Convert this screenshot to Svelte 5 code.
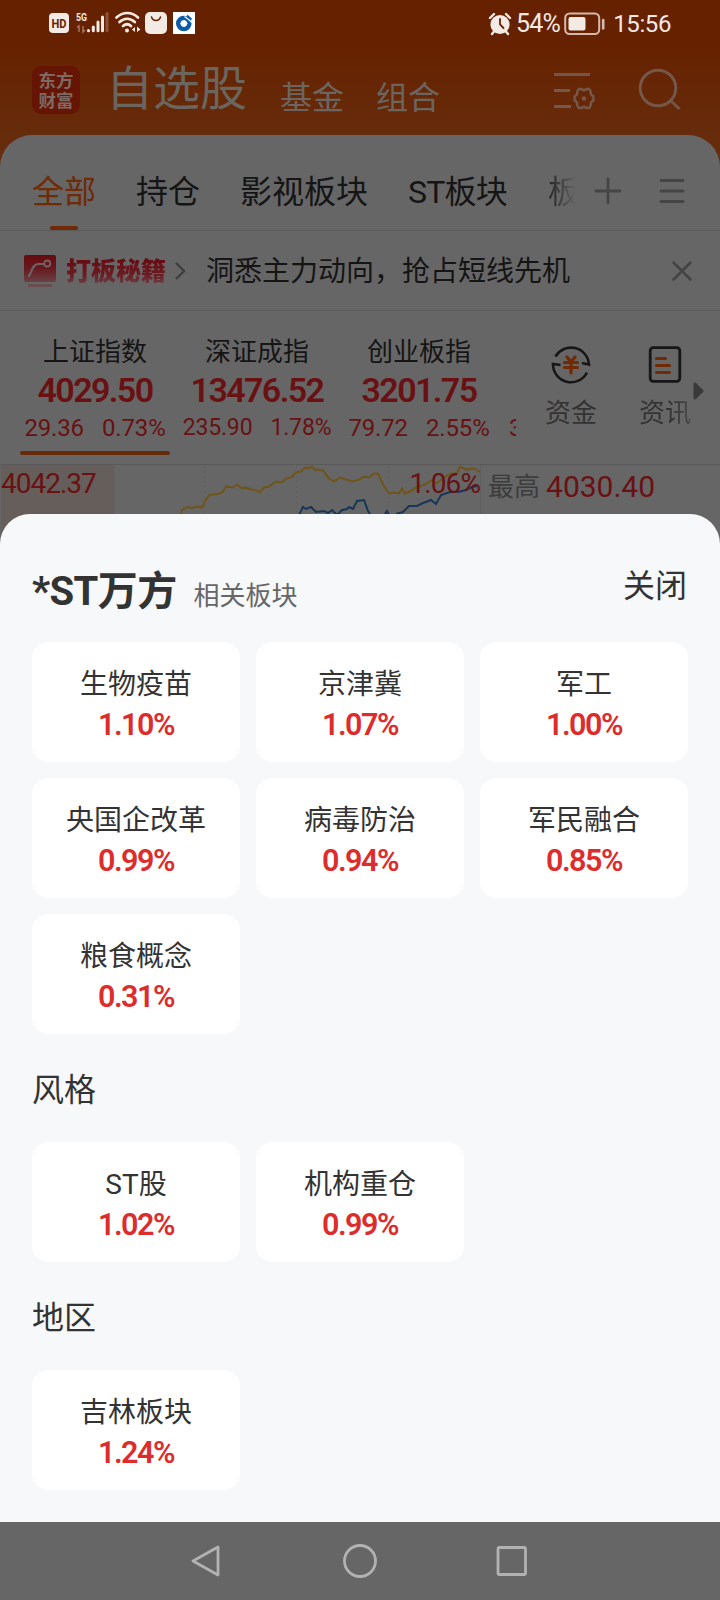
<script>
  const tabs = ['全部', '持仓', '影视板块', 'ST板块'];
  const indices = [
    { name: '上证指数', value: '4029.50', diff: '29.36', pct: '0.73%', size: 24, active: true },
    { name: '深证成指', value: '13476.52', diff: '235.90', pct: '1.78%', size: 23 },
    { name: '创业板指', value: '3201.75', diff: '79.72', pct: '2.55%', size: 24 }
  ];
  const groups = [
    {
      title: '',
      items: [
        ['生物疫苗', '1.10%'], ['京津冀', '1.07%'], ['军工', '1.00%'],
        ['央国企改革', '0.99%'], ['病毒防治', '0.94%'], ['军民融合', '0.85%'],
        ['粮食概念', '0.31%']
      ]
    },
    { title: '风格', items: [['ST股', '1.02%'], ['机构重仓', '0.99%']] },
    { title: '地区', items: [['吉林板块', '1.24%']] }
  ];
</script>

<div class="screen">
  <div class="top">
    <div class="status">
      <svg class="st-left" width="160" height="30" viewBox="45 8 160 30">
        <rect x="49" y="13" width="20" height="20" rx="4" fill="#f3e9e5" />
        <text x="59" y="28" text-anchor="middle" textLength="15" lengthAdjust="spacingAndGlyphs" font-size="13" font-weight="700" fill="#662200">HD</text>
        <text x="76" y="21" textLength="11" lengthAdjust="spacingAndGlyphs" font-size="11.5" font-weight="700" fill="#f3e9e5">5G</text>
        <path d="M77 27.500l2-1.500v6M83 26v6l2-2" fill="none" stroke="#a5796a" stroke-width="1.400" />
        <g stroke="#f3e9e5" stroke-width="3" stroke-linecap="round">
          <path d="M88.500 30.500v.3M93.300 27v3.800M98 22v8.800M102.500 17v13.800" />
          <path d="M107 13.500v17.300" stroke="#8c523b" />
        </g>
        <g fill="none" stroke="#f3e9e5" stroke-width="2.700" stroke-linecap="round">
          <path d="M116.500 17.500c6.500-6 15-6 21.500 0M119.500 22c4.800-4.300 10.500-4.300 15.300 0M123 26c2.600-2.200 5.600-2.200 8 0" />
        </g>
        <circle cx="127" cy="30.500" r="2" fill="#f3e9e5" />
        <path d="M132 29.500l3-2.500v5zM137 26.500l3.500 3-3.500 2.500z" fill="#f3e9e5" />
        <rect x="145" y="12" width="22" height="22" rx="5" fill="#f3e9e5" />
        <path d="M151.500 17c1.500 4.500 7.500 4.500 9 0" fill="none" stroke="#662200" stroke-width="1.500" stroke-linecap="round" />
        <rect x="173" y="12" width="22" height="22" fill="#fff" />
        <circle cx="183.800" cy="23.500" r="5.500" fill="none" stroke="#0d5aa7" stroke-width="4.600" />
        <path d="M184.500 16.500l3.500 2.500 4.500 4" fill="none" stroke="#fff" stroke-width="1.200" />
        <path d="M184 19.700l3.800 3.800-3.800 3.800-3.800-3.800z" fill="#fff" />
        <path d="M187 15.500l4.500 4" stroke="#0d5aa7" stroke-width="1.800" />
      </svg>
      <div class="st-right">
        <svg width="24" height="24" viewBox="0 0 24 24">
          <circle cx="12" cy="12.500" r="9.600" fill="#f3e9e5" />
          <path d="M2 6l4-4M22 6l-4-4M4 22l2-2.500M20 22l-2-2.500" stroke="#f3e9e5" stroke-width="2.400" stroke-linecap="round" />
          <path d="M12 7v5.500l3.500 3.500" fill="none" stroke="#662200" stroke-width="1.800" stroke-linecap="round" />
        </svg>
        <span class="batt-text">54%</span>
        <svg width="42" height="24" viewBox="0 0 42 24">
          <rect x="1.200" y="1.500" width="34" height="20.500" rx="4.500" fill="none" stroke="#d5b9ae" stroke-width="2" />
          <rect x="4.500" y="5" width="17" height="13.500" rx="2" fill="#f3e9e5" />
          <path d="M39.200 8v8.500" stroke="#d5b9ae" stroke-width="2.600" stroke-linecap="round" />
        </svg>
        <span class="time">15:56</span>
      </div>
    </div>
    <div class="header">
      <div class="logo"><span>东方</span><span>财富</span></div>
      <h1>自选股</h1>
      <span class="sub">基金</span>
      <span class="sub second">组合</span>
      <svg class="settings" width="44" height="40" viewBox="0 0 44 40" fill="none" stroke="#75574a" stroke-width="3">
        <path d="M0 3.500h36M0 19.500h16M0 35.500h17" />
        <path d="M24.800 18h2.700c1.500 1.500 3.500 1.500 5 0h2.700l1.700 3c-.6 2 .4 3.600 2.500 4.200v4.600c-2.100.6-3.100 2.200-2.500 4.200l-1.700 3h-2.700c-1.500-1.500-3.500-1.500-5 0h-2.700l-1.700-3c.6-2-.4-3.600-2.500-4.200v-4.600c2.100-.6 3.100-2.200 2.500-4.200z" stroke-width="2.500" stroke-linejoin="round" />
        <circle cx="30" cy="27.500" r="2.300" fill="#75574a" stroke="none" />
      </svg>
      <svg class="search" width="44" height="44" viewBox="0 0 44 44" fill="none" stroke="#75574a" stroke-width="3">
        <circle cx="20" cy="20" r="17.800" /><path d="M32.500 32.500l9 8.500" />
      </svg>
    </div>
  </div>

  <main>
    <nav class="tabs">
      {#each tabs as tab, i}
        <span class="tab" class:on={i === 0} class:latin={i === 3}>{tab}</span>
      {/each}
      <span class="tab cut">板</span>
      <svg class="plus" width="28" height="28" viewBox="0 0 28 28"><path d="M14 2v24M2 14h24" stroke="#454545" stroke-width="2.800" stroke-linecap="round" /></svg>
      <svg class="menu" width="26" height="28" viewBox="0 0 26 28"><path d="M2 3.500h22M2 14h22M2 24.500h22" stroke="#454545" stroke-width="3" stroke-linecap="round" /></svg>
    </nav>

    <div class="promo">
      <svg width="32" height="32" viewBox="0 0 32 32">
        <defs><linearGradient id="pg" x2="0" y2="1"><stop offset="0" stop-color="#660a10" /><stop offset=".5" stop-color="#671a1e" /><stop offset="1" stop-color="#694145" /></linearGradient></defs>
        <rect width="32" height="27" rx="2" fill="url(#pg)" />
        <path d="M5 21c3-5 4-12 9-12h6" fill="none" stroke="#6e6262" stroke-width="2.200" stroke-linecap="round" />
        <circle cx="23.300" cy="8.500" r="3" fill="none" stroke="#6e6262" stroke-width="1.800" />
        <path d="M4 30.500h24" stroke="#6a4a4a" stroke-width="2.600" />
      </svg>
      <b>打板秘籍</b>
      <svg class="chev" width="12" height="20" viewBox="0 0 12 20"><path d="M2 2l8 8-8 8" fill="none" stroke="#3f3f3f" stroke-width="2.400" /></svg>
      <span>洞悉主力动向，抢占短线先机</span>
      <svg class="close-x" width="20" height="20" viewBox="0 0 20 20"><path d="M1.500 1.500l17 17M18.500 1.500l-17 17" stroke="#444" stroke-width="2.500" stroke-linecap="round" /></svg>
    </div>

    <section class="market">
      <div class="indices">
        {#each indices as ix}
          <div class="index" class:active={ix.active}>
            <span class="name">{ix.name}</span>
            <span class="value">{ix.value}</span>
            <span class="chg" style="font-size:{ix.size}px"><i>{ix.diff}</i><i>{ix.pct}</i></span>
          </div>
        {/each}
        <div class="index"><span class="chg next">3</span></div>
      </div>
      <div class="tool">
        <svg width="42" height="42" viewBox="0 0 42 42" fill="none">
          <path d="M5.500 12.500A18 18 0 0 1 39 20.500l-7-1.500M37 28.500A18 18 0 0 1 3 20l7.500 1" stroke="#171717" stroke-width="2.600" />
          <path d="M17 13l4 5 4-5M14.500 18.500h13M14.500 23.500h13M21 18.500V29" stroke="#702a05" stroke-width="3.200" stroke-linecap="round" />
        </svg>
        <span>资金</span>
      </div>
      <div class="tool news">
        <svg width="42" height="42" viewBox="0 0 42 42" fill="none">
          <rect x="6.200" y="3.700" width="29.600" height="33.600" rx="3" stroke="#171717" stroke-width="2.800" />
          <path d="M12.500 14.500h9M12.500 21.500h13M12.500 28.500h13" stroke="#702a05" stroke-width="3.200" stroke-linecap="round" />
        </svg>
        <span>资讯</span>
      </div>
      <svg class="more" width="11" height="18" viewBox="0 0 11 18"><path d="M2 2v14l7-7z" fill="#3a3a3a" stroke="#3a3a3a" stroke-width="3" stroke-linejoin="round" /></svg>
    </section>

    <section class="chart">
      <div class="plot">
        <svg width="480" height="80" viewBox="0 464 480 80" fill="none">
          <rect x="1" y="464" width="113" height="80" fill="#665e5a" />
          <path d="M204.500 465v80M296.500 465v80M388.500 465v80" stroke="#5e5e5e" stroke-dasharray="2 3" />
          <path d="M181 515l1-6 5-3 5 1 5-1.500 5 1 3-6 4-6 4-1 7-1 3-2 3-5 7 1 4-3 5 4 3-1 6 2 6 1 3 2 4-5 5-1 7-5 5 1 6-4 4-1 5-5 5-1 4-4 4 1 3-2 3 3 8 1 6 8 5 3 6-4 6 2 7 2 6-2 5-3 5 1 5-4 4 0 5 11 6 9 5-1 5 1 3-5 3 5 5-2 6-4 9-3 6-4 5 3 8-6 7-4 6 0 3-7 6 3 8-1 5 3 7-1 8 0 8-3 6-1" stroke="#705519" stroke-width="2" />
          <path d="M294 515l5-1 4-8 3 2 5-2 5 5 8-1 4 2 4-3 5 5 5-5 5-1 2-2 4 2 4-8 7-1 4 11 4 6 2 4M383 516l4-6 3 6M396 513l7-2 6-6 8 0 6-3 8-3 5 4 5-9 9-3 8 0 8-2 6-3 5-1" stroke="#183657" stroke-width="2" />
        </svg>
        <span class="high">4042.37</span>
        <span class="rise">1.06%</span>
      </div>
      <div class="quote"><span>最高</span><em>4030.40</em></div>
    </section>
  </main>

  <section class="sheet">
    <header>
      <h2>*ST万方</h2>
      <span class="related">相关板块</span>
      <span class="shut">关闭</span>
    </header>
    {#each groups as g}
      {#if g.title}<h3>{g.title}</h3>{/if}
      <div class="grid">
        {#each g.items as [name, pct]}
          <div class="card"><span>{name}</span><b>{pct}</b></div>
        {/each}
      </div>
    {/each}
  </section>

  <footer>
    <svg width="32" height="34" viewBox="0 0 32 34"><path d="M28 3v28L3 17z" /></svg>
    <svg width="34" height="34" viewBox="0 0 34 34"><circle cx="17" cy="17" r="15.500" /></svg>
    <svg width="32" height="30" viewBox="0 0 32 30"><rect x="2" y="1.500" width="27.500" height="27" rx="1.500" /></svg>
  </footer>
</div>

<style>
  :global(body) { margin: 0; background: #666; }
  .screen {
    width: 720px; height: 1600px; overflow: hidden; display: flex; flex-direction: column;
    font-family: Roboto, "Noto Sans CJK SC", sans-serif; background: #666; color: #151515;
    white-space: nowrap;
  }
  svg { display: block; flex: none; }
  h1, h2, h3 { margin: 0; font-weight: 400; }
  i, em { font-style: normal; }

  .top { height: 170px; flex: none; background: linear-gradient(#662200 0, #662200 45px, #662c0c 135px); }
  .status { height: 46px; display: flex; justify-content: space-between; padding: 0 49px 0 45px; color: #f3e9e5; }
  .st-left { margin-top: 8px; }
  .st-right { display: flex; align-items: center; height: 47px; }
  .batt-text { font-size: 25px; letter-spacing: -0.700px; margin: 0 4px 0 4px; }
  .time { font-size: 24px; margin-left: 7px; letter-spacing: -0.400px; }

  .header { display: flex; height: 88px; padding-left: 32px; color: #6b6560; }
  .logo {
    width: 48px; height: 48px; margin-top: 20px; border-radius: 9px; background: #661505; color: #7c6a63;
    display: flex; flex-direction: column; align-items: center; justify-content: center;
    font: 700 17.500px/20px "Noto Sans CJK SC", sans-serif; box-sizing: border-box;
  }
  h1 { font-size: 47px; line-height: 60px; margin: 13px 0 0 26px; }
  .sub { font-size: 32px; line-height: 40px; margin: 32px 0 0 33px; }
  .sub.second { margin-left: 32px; }
  .settings { margin: 25px 0 0 114px; }
  .search { margin: 22px 0 0 40px; }

  main { height: 409px; margin-top: -35px; flex: none; background: #666; border-radius: 32px 32px 0 0; }
  .tabs { display: flex; height: 95px; border-bottom: 1px solid #5a5a5a; padding-left: 32px; }
  .tab { font-size: 32px; line-height: 75px; padding-top: 20px; margin-right: 40px; position: relative; }
  .tab.on { color: #702a05; }
  .tab.latin { letter-spacing: -0.800px; margin-right: 41px; }
  .tab.on::after { content: ""; position: absolute; left: 18px; top: 91px; width: 28px; height: 4px; border-radius: 2px; background: #702a05; }
  .tab.cut { width: 28px; overflow: hidden; margin: 0; -webkit-mask: linear-gradient(90deg, #000c, transparent); mask: linear-gradient(90deg, #000c, transparent); }
  .plus { margin: 42px 0 0 18px; }
  .menu { margin: 42px 0 0 37px; }

  .promo { display: flex; align-items: center; height: 79px; border-bottom: 1px solid #5a5a5a; padding: 0 28px 0 24px; }
  .promo b {
    font: 900 25px/36px "Noto Sans CJK SC", sans-serif; margin: -4px 0 0 10px;
    background: linear-gradient(#690b12 25%, #6b1b22 65%, #694348 95%); -webkit-background-clip: text; background-clip: text; color: transparent;
  }
  .chev { margin: 0 20px 0 8px; }
  .promo span { font-size: 28px; line-height: 40px; margin-top: 2px; }
  .close-x { margin-left: auto; }

  .market { display: flex; height: 153px; border-bottom: 1px solid #5a5a5a; }
  .indices { display: flex; gap: 12px; width: 496px; padding-left: 20px; overflow: hidden; }
  .index { width: 150px; flex: none; display: flex; flex-direction: column; align-items: center; height: 144px; position: relative; }
  .index.active::after { content: ""; position: absolute; left: 0; bottom: 0; width: 150px; height: 4px; border-radius: 2px; background: #662a08; }
  .name { font-size: 26px; line-height: 36px; margin-top: 23px; }
  .value { font-size: 34px; line-height: 40px; font-weight: 600; letter-spacing: -1.600px; color: #691113; }
  .chg { display: flex; gap: 18px; line-height: 30px; color: #691113; margin-top: 3px; letter-spacing: -0.150px; }
  .chg.next { font-size: 24px; margin: 102px 0 0 3px; align-self: flex-start; }
  .tool { display: flex; flex-direction: column; align-items: center; margin: 33px 0 0 28px; width: 54px; color: #333; }
  .tool span { font-size: 26px; line-height: 36px; margin-top: 9px; }
  .news { margin-left: 40px; }
  .news span { -webkit-mask: linear-gradient(90deg, #000 60%, #0008); mask: linear-gradient(90deg, #000 60%, #0008); }
  .more { margin: 71px 0 0 1px; }

  .chart { display: flex; height: 80px; overflow: hidden; }
  .plot { position: relative; width: 480px; border-right: 1px solid #5e5e5e; color: #691113; font-size: 28px; line-height: 36px; }
  .high { position: absolute; left: 1px; top: 1px; letter-spacing: -1px; }
  .rise { position: absolute; right: 0; top: 1px; letter-spacing: -0.900px; }
  .quote { display: flex; padding-left: 7px; line-height: 44px; font-size: 26px; color: #3d3d3d; }
  .quote em { font-size: 30px; color: #691113; margin-left: 6px; }

  .sheet {
    position: relative; margin-top: -30px; height: 1008px; flex: none; box-sizing: border-box; padding: 0 32px;
    border-radius: 30px 30px 0 0; background: #f7f8fa; color: #333;
  }
  .sheet header { display: flex; height: 128px; }
  h2 { font-size: 40px; line-height: 60px; font-weight: 700; margin-top: 48px; letter-spacing: -0.600px; }
  .related { font-size: 26px; line-height: 40px; margin: 62px 0 0 17px; color: #666; }
  .shut { font-size: 32px; line-height: 40px; margin: 52px 1px 0 auto; }
  .grid { display: grid; grid-template-columns: repeat(3, 208px); gap: 16px; }
  .card {
    height: 120px; box-sizing: border-box; padding-top: 23px; background: #fff; border-radius: 16px;
    display: flex; flex-direction: column; align-items: center;
  }
  .card span { font-size: 28px; line-height: 40px; }
  .card b { font-size: 30.500px; line-height: 40px; font-weight: 600; color: #dd2c2c; letter-spacing: -1.500px; }
  h3 { font-size: 32px; line-height: 40px; padding: 36px 0 32px; }

  footer { display: flex; height: 78px; flex: none; align-items: center; padding-left: 190px; background: #666; }
  footer svg { fill: none; stroke: #b2b2b2; stroke-width: 2.800; stroke-linejoin: round; }
  footer svg:nth-child(2) { margin-left: 121px; }
  footer svg:nth-child(3) { margin-left: 119px; }
</style>
